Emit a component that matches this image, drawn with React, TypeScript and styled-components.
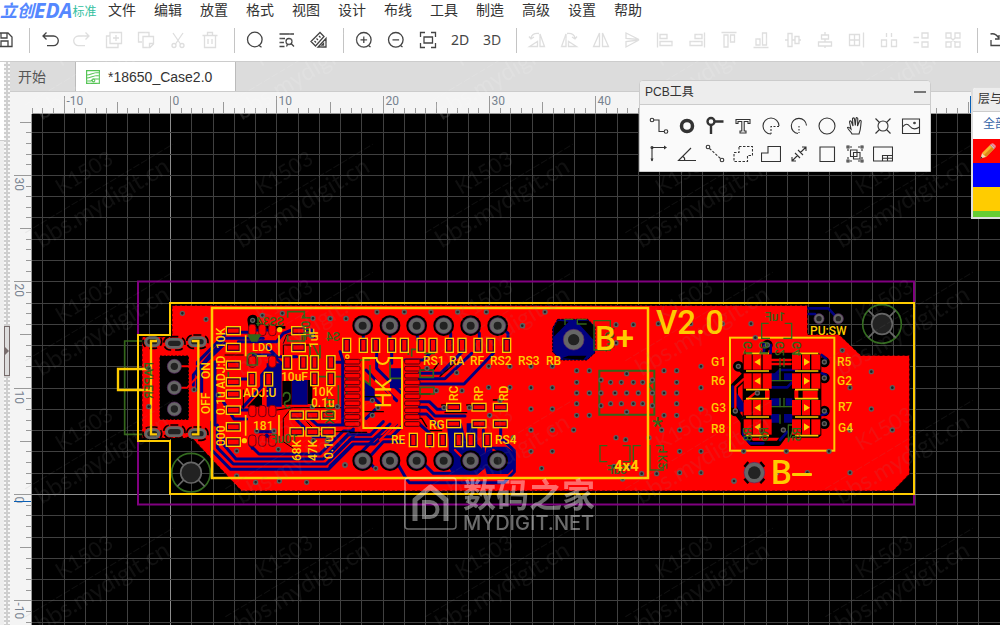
import React from 'react';
import styled, { createGlobalStyle, css } from 'styled-components';

const RED = '#ff0000';
const NAVY = '#000080';
const SILK = '#ffcc00';
const SILK_BACK = '#33661a';
const sans = '"Liberation Sans", "Noto Sans CJK SC", sans-serif';

const GlobalStyle = createGlobalStyle`
  * { box-sizing: border-box; }
  body { margin: 0; background: #fff; color: #333; font-family: ${sans}; overflow: hidden; }
  button { font: inherit; color: inherit; border: 0; padding: 0; background: none; cursor: pointer; }
  svg { display: block; }
`;

/* ---------- page frame ---------- */

const Page = styled.div`
  position: relative;
  display: flex;
  flex-direction: column;
  height: 100vh;
  overflow: hidden;
`;

const MenuBar = styled.header`
  display: flex;
  align-items: center;
  height: 20px;
  flex: none;
`;

const Brand = styled.a`
  display: flex;
  align-items: center;
  width: 99px;
  height: 20px;
  color: #5588ff;
  text-decoration: none;
  white-space: nowrap;
`;

const BrandHan = styled.span`
  font: italic 700 17px/20px "Noto Sans CJK SC", sans-serif;
`;

const BrandLatin = styled.span`
  font: italic 700 21px/20px "Noto Sans", sans-serif;
`;

const Edition = styled.span`
  color: #33bf9f;
  font: 12px/20px "Noto Sans CJK SC", sans-serif;
  padding-top: 2px;
`;

const Menu = styled.nav`
  display: flex;
  gap: 18px;
  padding-left: 9px;
`;

const MenuItem = styled.button`
  font-size: 14px;
  line-height: 20px;
  white-space: nowrap;
`;

const Toolbar = styled.div`
  display: flex;
  align-items: center;
  height: 40px;
  flex: none;
  margin: 0 0 1px -11px;
  overflow: hidden;
`;

const ToolButton = styled.button<{ $off?: boolean }>`
  display: flex;
  align-items: center;
  justify-content: center;
  width: 32px;
  height: 32px;
  flex: none;
  color: ${(p) => (p.$off ? '#dedede' : '#444')};
  font: 14px/20px "Noto Sans", sans-serif;
`;

const Divider = styled.span`
  width: 1px;
  height: 25px;
  flex: none;
  margin: 0 4px 0 8px;
  background: #c4c4c4;
`;

const Body = styled.div`
  display: flex;
  flex: 1;
  min-height: 0;
`;

const Side = styled.aside`
  display: flex;
  flex-direction: column;
  width: 4px;
  flex: none;
  background: #eeeeee;
  border-top: 1px solid #ccc;
`;

const SideHead = styled.div`
  height: 79px;
  background: #fff;
  border-bottom: 1px solid #ccc;
`;

const Splitter = styled.div`
  display: flex;
  align-items: center;
  width: 6px;
  flex: none;
  border-top: 1px solid #ccc;
  background-color: #cfcfcf;
  background-image: radial-gradient(circle at 1px 1px, #f8f8f8 1px, transparent 1px);
  background-size: 4px 4px;
`;

const Collapse = styled.button`
  display: flex;
  align-items: center;
  width: 6px;
  height: 50px;
  margin-top: 14px;
  background: #ddd;
  border: 1px solid #776c6c;
`;

const Editor = styled.main`
  display: flex;
  flex-direction: column;
  flex: 1;
  min-width: 0;
`;

const TabBar = styled.div`
  display: flex;
  height: 31px;
  flex: none;
  background: #dcdcdc;
  border-top: 1px solid #ccc;
  border-bottom: 1px solid #ccc;
`;

const Tab = styled.button<{ $active?: boolean }>`
  display: flex;
  align-items: center;
  gap: 8px;
  width: 65px;
  padding: 0 8px;
  color: #555;
  font-size: 14px;
  line-height: 20px;
  white-space: nowrap;
  ${(p) =>
    p.$active &&
    css`
      width: 161px;
      padding: 0 10px;
      color: #333;
      background: #fff;
      border-left: 1px solid #bbb;
      border-right: 1px solid #bbb;
    `}
`;

const Workspace = styled.div`
  position: relative;
  display: grid;
  grid-template: 22px minmax(0, 1fr) / 22px minmax(0, 1fr);
  flex: 1;
  min-height: 0;
  background: #f4f4f4;
`;

const TopRuler = styled.svg`
  grid-column: 1 / 3;
  width: 100%;
  height: 22px;
`;

const LeftRuler = styled.svg`
  width: 22px;
  height: 100%;
`;

const Canvas = styled.svg`
  width: 100%;
  height: 100%;
  background: #000;
`;

/* ---------- floating panels ---------- */

const ToolPanel = styled.section`
  position: absolute;
  z-index: 1;
  top: -12px;
  right: 69px;
  width: 292px;
  background: #fafafa;
  border: 1px solid #ccc;
  border-radius: 4px 4px 0 0;
`;

const LayerPanel = styled.section`
  position: absolute;
  z-index: 1;
  top: -5px;
  right: -111px;
  width: 140px;
  background: #fff;
  border: 2px solid #ddd;
  border-top-width: 1px;
  border-radius: 4px 4px 0 0;
`;

const PanelHead = styled.h2`
  display: flex;
  align-items: center;
  justify-content: space-between;
  height: 24px;
  margin: 0;
  padding: 0 4px 2px 5px;
  background: #ededed;
  border-bottom: 1px solid #ccc;
  border-radius: 3px 3px 0 0;
  font-size: 12px;
  font-weight: 400;
  line-height: 20px;
  white-space: nowrap;
`;

const ToolGrid = styled.div`
  display: grid;
  grid-template-columns: repeat(10, 28px);
  grid-auto-rows: 28px;
  padding: 7px 0 3px 5px;
`;

const GridButton = styled.button`
  display: flex;
  align-items: center;
  justify-content: center;
  color: #333;
`;

const LayerTab = styled.button`
  display: block;
  height: 27px;
  padding: 0 0 4px 10px;
  color: #3564a8;
  font-size: 12px;
  line-height: 20px;
  white-space: nowrap;
`;

const LayerRow = styled.button<{ $color: string; $height?: number }>`
  display: flex;
  align-items: center;
  width: 100%;
  height: ${(p) => p.$height ?? 24}px;
  padding-left: 6px;
  background: ${(p) => p.$color};
`;

const Watermarks = styled.svg`
  position: absolute;
  inset: 0;
  width: 100%;
  height: 100%;
  pointer-events: none;
`;

/* ---------- icons ---------- */

const Icon = ({ children, w = 1.3 }: { children: React.ReactNode; w?: number }) => (
  <svg width="20" height="20" viewBox="0 0 20 20" fill="none" stroke="currentColor" strokeWidth={w}>
    {children}
  </svg>
);

type Tool = { name: string; off?: boolean; text?: string; art?: React.ReactNode };

const toolGroups: Tool[][] = [
  [{ name: '保存', art: <path d="M2 3h11l4 4v9.500H2zM6 3v5h6V3M6 16v-5h7v5" /> }],
  [
    { name: '撤销', art: <path d="M6.500 2.500L3 6l3.500 3.500M3 6h10.500a4.800 4.800 0 0 1 0 9.600H7" /> },
    { name: '重做', off: true, art: <path d="M13.500 2.500L17 6l-3.500 3.500M17 6H6.500a4.800 4.800 0 0 0 0 9.600H13" /> },
    { name: '复制', off: true, art: <path d="M6 2.500h11.500v11H6zM6 6H2.500v11.500H14V14M12 5v6M9 8h6" /> },
    { name: '粘贴', off: true, art: <path d="M6 12H2.500V2.500H13V6M7 6.500h10.500V14l-3.500 3.500H7zM17 13.500h-3.500V17" /> },
    { name: '剪切', off: true, art: <><path d="M5 3l7.500 11M15 3L7.500 14" /><circle cx="6" cy="15.500" r="2" /><circle cx="14" cy="15.500" r="2" /></> },
    { name: '删除', off: true, art: <path d="M2.500 5.500h15M7.500 5V2.500h5V5M4.500 6v11.500h11V6M8 9v5M12 9v5" /> },
  ],
  [
    { name: '查找', art: <><circle cx="9.800" cy="9.500" r="7.300" /><path d="M13.500 15l3 2.300" /></> },
    { name: '查找相似', art: <><path d="M2.500 4h14.500M2.500 8.500H8M2.500 12.500H7M2.500 16.500h5" /><circle cx="12" cy="11.500" r="3" /><path d="M14 13.500l3 3M9.500 16.500l1-2" /></> },
    { name: '设计工具', art: <><path d="M2 11.500L11 2.500l4 4-8.500 9.500zM5.500 11l1.500 1.500M7.500 8.500l1.500 1.500M10 6l1.500 1.500" /><path d="M17 8.500V17H9zM14.500 13.500v1.500H13z" /></> },
  ],
  [
    { name: '放大', art: <><circle cx="9.800" cy="9.800" r="7.300" /><path d="M14.500 15.500l2 1.500M6.500 9.800h6.600M9.800 6.500v6.600" /></> },
    { name: '缩小', art: <><circle cx="9.800" cy="9.800" r="7.300" /><path d="M14.500 15.500l2 1.500M6.500 9.800h6.600" /></> },
    { name: '适应', art: <path d="M2.500 7V2.500H7M13 2.500h4.500V7M17.500 13v4.500H13M7 17.500H2.500V13M6 7h8.500v6H6z" /> },
    { name: '二维', text: '2D' },
    { name: '三维', text: '3D' },
  ],
  [
    { name: '左旋', off: true, art: <path d="M2.500 16.500h8v-5zM13 16.500V4l4.500 12.500zM4 8c1-4 4-5 8-4.500M2 6.500L4 9l3-2" /> },
    { name: '右旋', off: true, art: <path d="M17.500 16.500h-8v-5zM7 16.500V4L2.500 16.500zM16 8c-1-4-4-5-8-4.500M18 6.500L16 9l-3-2" /> },
    { name: '水平翻转', off: true, art: <path d="M8.500 3v13.500H2.500zM11.500 3v13.500h6z" /> },
    { name: '垂直翻转', off: true, art: <path d="M3 3v5.500l13 1zM3 17v-5.500l13-1.500z" /> },
    { name: '左对齐', off: true, art: <path d="M2.500 2.500v15M5 4.500h7v4H5zM5 11.500h12v4H5z" /> },
    { name: '右对齐', off: true, art: <path d="M17.500 2.500v15M8 4.500h7v4H8zM3 11.500h12v4H3z" /> },
    { name: '顶对齐', off: true, art: <path d="M2.500 2.500h15M5 5h4v12H5zM11.500 5h4v7h-4z" /> },
    { name: '底对齐', off: true, art: <path d="M2.500 17.500h15M5 9h4v6H5zM11.500 3h4v12h-4z" /> },
    { name: '水平居中', off: true, art: <path d="M2 10h3M9 10h3M16 10h2M5 3.500h4v13H5zM12 6.500h4v7h-4z" /> },
    { name: '垂直居中', off: true, art: <path d="M10 2v3M10 9v3M10 16v2M6.500 5h7v4h-7zM3.500 12h13v4h-13z" /> },
    { name: '网格对齐', off: true, art: <path d="M2.500 4.500h10v11h-10zM7.500 4.500v11M2.500 10h10M16.500 2.500v15" /> },
    { name: '水平分布', off: true, art: <path d="M2.500 10h5v6.500h-5zM12.500 10h5v6.500h-5zM7.500 3v4M12.500 3v4" /> },
    { name: '垂直分布', off: true, art: <path d="M11 3h6v5h-6zM11 12h6v5h-6zM2.500 7.500H8M2.500 12.500H8" /> },
    { name: '阵列', off: true, art: <path d="M3 3h5v5H3zM12 3h5v5h-5zM3 12h5v5H3zM12 12h5v5h-5zM8 8l4 4M12 8l-4 4" /> },
  ],
  [{ name: '单位', art: <path d="M2.500 4c4-1 6.500 1 8.500 4.500M11 5v4H7M3 10v5.500h14" /> }],
];

const pcbTools: Tool[] = [
  { name: '导线', art: <><circle cx="3" cy="4" r="1.800" /><path d="M5 4h5v11.500h5" /><circle cx="17" cy="15.500" r="1.800" /></> },
  { name: '焊盘', art: <circle cx="10" cy="10" r="5.500" strokeWidth="3.500" /> },
  { name: '过孔', art: <><circle cx="6" cy="5.500" r="3.500" strokeWidth="2.400" /><path d="M10 5.500h8.500M6 9.500V18" strokeWidth="2.400" /></> },
  { name: '文本', art: <path d="M3 3.500h14v4h-2V5.500h-3.800v9.500H13v2H7v-2h1.800V5.500H5v2H3z" /> },
  { name: '扇形', art: <><path d="M10 18A8 8 0 1 1 18 10" /><path d="M18 10.500h-8V18" strokeDasharray="2 1.500" /></> },
  { name: '圆弧', art: <><path d="M9 17.500A7.600 7.600 0 1 1 17.500 9.500" /><path d="M10 10v7" strokeDasharray="1.500 1.500" /></> },
  { name: '圆', art: <circle cx="10" cy="10" r="8" /> },
  { name: '拖动', art: <path d="M7 18c-1-3-4-4-4.500-6.500 1-1 2.500.5 3.500 1.500L4.500 6c0-1.500 1.500-1.500 2 0L8 10 7.500 3c0-1.500 2-1.500 2 0l.8 6.500.7-7c.3-1.300 2-1 1.800.5L12.500 10l2-5c.6-1.200 2-.6 1.700.7C15.500 10 16 13 14 18z" /> },
  { name: '孔', art: <><circle cx="10" cy="10" r="5" /><path d="M6.500 6.500l-4-4M13.500 6.500l4-4M6.500 13.500l-4 4M13.500 13.500l4 4" /></> },
  { name: '图片', art: <><path d="M1.500 3h17v14.500h-17zM1.500 11c3-3.500 5-3.500 7.500-.5s5 3.500 9.500.5" /><circle cx="13.500" cy="7" r=".8" /></> },
  { name: '原点', art: <><path d="M3 17V3.500h13" /><path d="M15 1.500l3 2-3 2zM1.500 14.500h3l-1.500 3z" fill="currentColor" stroke="none" /><circle cx="3" cy="3.500" r="1" /></> },
  { name: '角度', art: <path d="M19 16.500H1.500L14 4M6 12.500c1.500 1 2 2.500 1.500 4" /> },
  { name: '连线', art: <><circle cx="3" cy="3" r="1.800" /><path d="M4.500 4.500l11 10" strokeDasharray="2.500 1.500" /><circle cx="17" cy="16" r="1.800" /></> },
  { name: '铺铜', art: <path d="M6 2.500h13.500v9h-5v6H1v-9h5z" strokeDasharray="2.500 1.500" /> },
  { name: '实心填充', art: <path d="M7 2.500h12.500v15H.5V9H7z" /> },
  { name: '尺寸', art: <path d="M3 17l5.500-5.500M11.500 8.500L17 3M13 3h4v4M3 13v4h4M6 9l5 5M9 6l5 5" /> },
  { name: '矩形', art: <path d="M3 3h14.500v14.500H3z" /> },
  { name: '组合', art: <path d="M5.500 6h6.500v6.500H5.500zM8.500 8.500H15V15H8.500zM2 2h2v2H2zM16 2h2v2h-2zM2 16h2v2H2zM16 16h2v2h-2zM5 3h2M13 3h2M3 5v2M3 13v2M17 5v2M17 13v2M5 17h2M13 17h2" /> },
  { name: '画布', art: <path d="M.5 3h19v14H.5zM9.500 17v-5.500h10M14.500 11.500V17M9.500 14.300h10" /> },
];

/* ---------- rulers and grid ---------- */

const STEP = 10.636;
const ORIGIN_X = 170.500;
const ORIGIN_Y = 494.500;
const snap = (v: number) => Math.floor(v) + 0.5;
const range = (from: number, to: number) => Array.from({ length: to - from + 1 }, (_, i) => from + i);

const rulerText = { fill: '#77828f', fontSize: 12, fontFamily: 'Roboto, sans-serif' };

const HorizontalRuler = () => (
  <TopRuler>
    <g transform="translate(-10 -92)" shapeRendering="crispEdges">
      {range(-13, 200).map((i) => {
        const x = snap(ORIGIN_X + i * STEP);
        const top = i % 10 === 0 ? 96 : i % 5 === 0 ? 102 : 108;
        return (
          <g key={i}>
            <line x1={x} x2={x} y1={top} y2={113} stroke="#999" />
            {i % 10 === 0 && <text x={x + 2} y={105} {...rulerText}>{i}</text>}
          </g>
        );
      })}
      <line x1="32" x2="3000" y1="113.500" y2="113.500" stroke="#999" />
      <line x1="970.500" x2="970.500" y1="96" y2="113" stroke="#0a5fb4" />
    </g>
  </TopRuler>
);

const VerticalRuler = () => (
  <LeftRuler>
    <g transform="translate(-10 -114)" shapeRendering="crispEdges">
      {range(-100, 35).map((i) => {
        const y = snap(ORIGIN_Y - i * STEP);
        const left = i % 10 === 0 ? 14 : i % 5 === 0 ? 20 : 26;
        return (
          <g key={i}>
            <line x1={left} x2={31} y1={y} y2={y} stroke="#999" />
            {i % 10 === 0 && <text transform={`translate(15 ${y + 2}) rotate(90)`} {...rulerText}>{i}</text>}
          </g>
        );
      })}
      <line x1="31.500" x2="31.500" y1="114" y2="3000" stroke="#999" />
      <line x1="14" x2="31" y1="501.500" y2="501.500" stroke="#0a5fb4" />
    </g>
  </LeftRuler>
);

const Grid = () => (
  <g shapeRendering="crispEdges">
    {range(-7, 100).map((i) => {
      const x = snap(ORIGIN_X + i * STEP * 2);
      return <line key={i} x1={x} x2={x} y1="0" y2="3000" stroke={i === 0 ? '#8c8c8c' : '#404040'} />;
    })}
    {range(-60, 18).map((i) => {
      const y = snap(ORIGIN_Y - i * STEP * 2);
      return <line key={i} x1="0" x2="3000" y1={y} y2={y} stroke={i === 0 ? '#8c8c8c' : '#404040'} />;
    })}
  </g>
);

/* ---------- board drawing: each sheet is laid out in thirds of a pixel ---------- */

const Sheet = ({ x, y, children }: { x: number; y: number; children: React.ReactNode }) => (
  <g transform={`translate(${x} ${y}) scale(${1 / 3})`}>{children}</g>
);

type P = [number, number];
type Box = [number, number, number, number];

const Vias = ({ at }: { at: P[] }) => (
  <g fill="#222" stroke="#5e5e5e" strokeWidth="4">
    {at.map(([x, y], i) => <circle key={i} cx={x} cy={y} r="6" />)}
  </g>
);

const Traces = ({ paths, color = NAVY, width = 8 }: { paths: string[]; color?: string; width?: number }) => (
  <g fill="none" stroke={color} strokeWidth={width} strokeLinejoin="round" strokeLinecap="round">
    {paths.map((p) => <polyline key={p} points={p} />)}
  </g>
);

const Lands = ({ boxes }: { boxes: Box[] }) => (
  <g>
    {boxes.map(([x1, y1, x2, y2], i) => {
      const tall = y2 - y1 > x2 - x1;
      const padX = tall ? 6 : 5;
      const padY = tall ? 5 : 6;
      return (
        <g key={i}>
          <rect x={x1} y={y1} width={x2 - x1} height={y2 - y1} fill="#400028" stroke={SILK} strokeWidth="4" />
          <rect x={x1 + padX} y={y1 + padY} width={x2 - x1 - padX * 2} height={y2 - y1 - padY * 2} fill={RED} />
        </g>
      );
    })}
  </g>
);

const RoundPad = ({ x, y, r, hole, gap = 0 }: { x: number; y: number; r: number; hole: number; gap?: number }) => (
  <g>
    {gap > 0 && <circle cx={x} cy={y} r={r + gap} fill="#000" />}
    <circle cx={x} cy={y} r={r} fill="#666" stroke="#5c2a66" strokeWidth="2" />
    <circle cx={x} cy={y} r={hole} fill="#222" />
  </g>
);

const SlotPad = ({ x, y, w }: { x: number; y: number; w: number }) => (
  <g>
    <rect x={x - w / 2 - 4} y={y - 20} width={w + 8} height="40" rx="20" fill="none" stroke="#000" strokeWidth="5" strokeDasharray="24 12" />
    <rect x={x - w / 2} y={y - 16} width={w} height="32" rx="16" fill="#666" />
    <rect x={x - w / 2 + 9} y={y - 8} width={w - 18} height="16" rx="8" fill="#222" />
  </g>
);

const MountHole = ({ x, y }: { x: number; y: number }) => (
  <g fill="none" strokeWidth="5">
    <circle cx={x} cy={y} r="58" stroke="#336b1f" />
    <path d={`M${x - 41} ${y - 41}l82 82M${x + 41} ${y - 41}l-82 82`} stroke="#666" />
    <circle cx={x} cy={y} r="31" fill="#222" stroke="#666" />
  </g>
);

const leftLands: Box[] = [
  [349, 155, 391, 179], [349, 205, 391, 230], [349, 258, 391, 283], [349, 308, 391, 333],
  [349, 345, 391, 370], [349, 393, 391, 418], [349, 443, 391, 468], [349, 488, 391, 514],
  [545, 155, 586, 179], [545, 205, 586, 230],
  [518, 242, 545, 283], [568, 242, 592, 283], [602, 242, 625, 283], [650, 242, 675, 283],
  [602, 291, 625, 332], [650, 291, 675, 332], [413, 292, 438, 333], [463, 292, 488, 333],
  [540, 408, 580, 433], [588, 408, 627, 433], [635, 408, 675, 433],
  [540, 458, 580, 483], [588, 458, 627, 483], [635, 458, 675, 483],
];

const midLands: Box[] = [
  ...[38, 88, 125, 173, 211, 261, 297, 346, 384, 432, 470, 518].map((x): Box => [x, 145, x + 24, 187]),
  ...[350, 426, 490].flatMap((x): Box[] => [[x, 340, x + 42, 363], [x, 390, x + 42, 413]]),
  ...[238, 287, 326, 374, 410, 460].map((x): Box => [x, 430, x + 24, 470]),
];

const smallPins: P[] = [
  [427, 165], [457, 165], [487, 165], [427, 260], [487, 260],
  [427, 408], [457, 408], [487, 408], [427, 497], [457, 497], [487, 497],
];

const LeftSection = () => (
  <Sheet x={110} y={275}>
    <rect x="150" y="243" width="85" height="190" fill="#000" stroke="#000" strokeWidth="3" strokeDasharray="7 4" />
    <Traces
      width={9}
      paths={[
        '305,440 305,525 362,583 655,583 730,508', '322,450 322,518 370,567 648,567 730,485',
        '340,490 340,508 378,552 640,552 730,462', '420,500 420,510 447,537 630,537 700,468 730,468',
        '262,345 262,262 352,172 420,172', '275,350 275,272 345,205', '250,330 250,300 300,240 345,190 460,190',
        '315,260 315,450', '340,380 372,432 410,432', '392,312 430,312', '385,200 500,200 520,175 545,165',
        '430,240 487,240 520,270', '400,395 455,335 455,300 490,260', '380,405 430,405', '600,430 622,450 730,450',
        '560,435 610,485 660,485', '586,165 605,165 612,185', '440,470 492,470', '675,262 720,262', '470,215 500,245 560,245',
        '427,165 487,165', '427,497 427,520', '457,497 470,480 487,497',
      ]}
    />
    <path d="M470 265h45v130h-45zM545 315h48v78h-48z" fill={NAVY} />
    <path d="M412 135a16 16 0 0 1 32 0l12 18h70v8h-110zM517 318h28v72h-28zM593 315h14v72h-14zM412 395l44-48v48z" fill="#000" />
    <Traces color={RED} width={6} paths={['200,274 262,274', '200,338 232,338 262,305', '520,392 640,392']} />
    <Traces color="#000" width={3} paths={['500,405 550,398 700,398', '590,440 620,470 720,470', '540,405 520,430 520,500 550,520', '400,345 400,400', '520,240 520,210 600,210', '345,240 400,240', '545,180 530,180 520,205']} />
    <g fill={RED} stroke="#700010" strokeWidth="3">
      {smallPins.map(([x, y]) => <rect key={`${x}-${y}`} x={x - 11} y={y - 17} width="22" height="34" rx="9" />)}
    </g>
    <g fill="none" stroke={SILK_BACK} strokeWidth="5">
      <path d="M120 198H44v280h76M533 128v-18h50v18M533 180v18h50v-18M600 210v35M630 210v40l-20-40M412 245a16 16 0 0 1 30 0v25h-30zM355 290v40h35M600 305h110v60M520 365q0-12 10-12t10 12-10 14-4 14 14 0" />
      <path d="M415 180h35l-10 18h-15zM685 330v60" fill={SILK_BACK} />
    </g>
    <Lands boxes={leftLands} />
    <SlotPad x={127} y={200} w={48} />
    <SlotPad x={193} y={205} w={56} />
    <SlotPad x={262} y={200} w={56} />
    <SlotPad x={127} y={476} w={48} />
    <SlotPad x={193} y={470} w={56} />
    <SlotPad x={262} y={476} w={56} />
    {[274, 338, 402].map((y) => <RoundPad key={y} x={193} y={y} r={21} hole={11} />)}
    <MountHole x={243} y={593} />
    <g fill="none" stroke={SILK} strokeWidth="7">
      <path d="M141 198h-18v280h18M245 198h20v280h-20M123 282H24v63h99" />
      <path d="M407 181v63M507 181v63M407 420v62M507 420v62M441 243h30" strokeWidth="5" />
    </g>
    <circle cx="509" cy="164" r="8" fill={SILK} />
    <circle cx="403" cy="497" r="8" fill={SILK} />
    <Vias
      at={[
        [217, 115], [288, 133], [517, 115], [457, 121], [609, 130], [660, 130], [708, 130], [116, 280], [116, 395],
        [252, 344], [325, 360], [380, 528], [380, 603], [437, 622], [508, 618], [590, 622], [505, 523], [440, 468],
        [492, 468], [610, 497], [652, 497], [705, 570], [683, 395], [607, 395], [428, 136], [605, 183],
      ]}
    />
  </Sheet>
);

const pinRows = range(0, 9).map((i) => 215 + Math.round(i * 20.8));

const MiddleSection = () => (
  <Sheet x={330} y={290}>
    <path d="M350 400h45l15 60v-60h32v62l22 22v52l-18 14h-80l-10-20v-80zM470 470h60l26 20v40l-22 22h-64l-10-40z" fill={NAVY} />
    <path d="M104 262l30 30v40h-30zM180 235h35v60h-35z" fill={NAVY} />
    <Traces
      width={9}
      paths={[
        '268,250 332,250 400,182', '268,266 345,266 425,190', '268,282 402,282 490,190', '38,210 38,400',
        '268,335 298,335 322,358 345,358', '268,352 290,352 315,378 405,378', '268,372 290,372 330,412', '230,402 268,402 300,430 300,470',
        '0,510 62,448 130,448 180,402', '0,528 68,462 134,462 200,402', '0,492 55,434 122,434 160,395', '90,490 140,440 185,440 215,410',
        '115,505 160,455 215,455', '205,525 228,565 238,578 522,578 553,545 553,482 520,450', '285,525 310,550 440,550 460,530 460,420', '130,530 90,490',
        '100,110 100,150', '180,110 180,150', '262,110 262,150', '346,110 362,130 362,150', '430,110 448,130 448,150', '512,110 534,130 534,150',
        '140,190 140,235 212,307', '185,190 185,220', '300,190 280,210 225,210', '30,185 38,210',
        '108,240 175,307 200,332', '108,300 150,342', '108,385 150,345', '512,413 512,450',
      ]}
    />
    <Traces color={RED} width={7} paths={['100,262 135,295 168,295', '110,345 145,352', '130,250 185,320 185,370 165,388', '375,480 410,515', '490,480 530,515', '210,390 150,450']} />
    <Traces color="#000" width={4} paths={['330,259 380,215', '240,240 310,240 325,220', '268,312 300,312', '105,320 150,320', '105,365 160,365', '345,368 410,368', '335,345 350,345', '410,345 430,345', '490,330 520,330', '60,427 110,427', '250,385 275,385 290,410', '300,422 335,422']} />
    {pinRows.map((y) => (
      <g key={y} stroke="#50000c" strokeWidth="3" fill={RED}>
        <rect x="44" y={y - 7} width="46" height="14" rx="4" />
        <rect x="224" y={y - 7} width="46" height="14" rx="4" />
      </g>
    ))}
    <g fill="none" stroke={SILK_BACK} strokeWidth="5">
      <path d="M270 240h40v22h-40zM270 292h42v20h-42zM120 225v60l-20-15M90 210h30M180 215v50h35M235 175v20M245 200v-22h15M285 180v10h30" />
    </g>
    <Lands boxes={midLands} />
    {[98, 180, 260, 341, 422, 503].map((x) => (
      <g key={x}>
        <RoundPad x={x} y={107} r={24} hole={12} gap={7} />
        <RoundPad x={x} y={512} r={24} hole={12} gap={7} />
      </g>
    ))}
    <path d="M100 204h40a18 18 0 0 0 36 0h40v210H100z" fill="none" stroke={SILK} strokeWidth="6" />
    <circle cx="52" cy="200" r="5" fill="none" stroke={SILK} strokeWidth="4" />
    <Vias
      at={[
        [1, 86], [48, 86], [141, 66], [223, 66], [303, 66], [383, 66], [469, 66], [578, 107], [380, 248], [291, 235],
        [319, 302], [396, 302], [476, 292], [540, 292], [476, 229], [540, 229], [479, 376], [550, 443], [510, 331],
        [342, 353], [418, 353], [45, 525], [137, 535], [127, 331], [144, 353], [127, 376], [22, 350],
      ]}
    />
  </Sheet>
);

const RightSection = () => (
  <Sheet x={520} y={290}>
    <path d="M113 88h90l22 22v78l-24 22h-78l-25-24v-72z" fill={NAVY} stroke="#001" strokeWidth="3" strokeDasharray="7 4" />
    <path d="M113 92l-12 22v26l45-45zM205 92l18 18v42l-55-60zM125 205l20-8h55l-10 12z" fill="#000" />
    <RoundPad x={161} y={149} r={31} hole={17} />
    <g fill="none" stroke={SILK_BACK} strokeWidth="4">
      <path d="M238 242h165v132H238zM385 285l18-12v35z" strokeWidth="6" />
      <path d="M222 92h49v88h-49zM135 105V88h25M200 88h-28v14h28M262 467h-22v48h22M308 467h22v48h-22M362 467h-22v48M408 467h22v20M430 520v20h-40v-75" />
    </g>
    <Vias
      at={[
        [75, 66], [7, 107], [288, 104], [340, 104], [415, 101], [512, 101], [607, 101], [288, 159],
        ...[229, 293, 357, 420, 484].flatMap((y): P[] => [[33, y], [97, y], [543, y]]),
        [543, 548], [65, 535], [161, 420],
        ...[242, 309, 376].flatMap((y): P[] => [[170, y], [208, y], [432, y], [470, y]]),
        ...[277, 341].flatMap((y): P[] => [[170, y], [272, y], [304, y], [340, y], [368, y], [470, y]]),
        [320, 251], [243, 270], [397, 270], [243, 309], [285, 309], [320, 309], [355, 309], [397, 309],
        [243, 347], [397, 347], [320, 366], [425, 420], [479, 420], [288, 443], [317, 449], [387, 443],
        [479, 484], [479, 548], [282, 529], [327, 532], [365, 551], [410, 551], [308, 567], [642, 573],
      ]}
    />
  </Sheet>
);

const ledVias: P[] = [[373, 216], [373, 264], [373, 363], [373, 401], [115, 229], [106, 363], [202, 165], [250, 420]];

const ledLoops = [
  '106,358 106,290 130,268', '98,350 98,290 130,258', '130,395 130,430 155,460 235,460 250,440 250,420',
  '202,165 195,190', '115,229 130,245', '100,355 130,395',
];

const LedSection = () => (
  <Sheet x={700} y={290}>
    <Traces color="#000" width={16} paths={ledLoops} />
    <path d="M128 196l9-8h218l9 8v240l-9 7H137l-9-8z" fill="#000" />
    <g fill="#000">{ledVias.map(([x, y]) => <circle key={`${x}-${y}`} cx={x} cy={y} r="16" />)}</g>
    <path d="M283 300h12v26h-12zM308 302h45v22h-45zM195 300h14v28h-14z" fill={RED} />
    <path d="M104 300l28 40v25h-12l-16-25zM213 250h25v24h-25zM252 250h24v24h-24zM213 325h30v22h-30zM257 325h20v22h-20zM213 372h25v26h-25zM252 372h25v26h-25z" fill={NAVY} />
    <Traces width={8} paths={['98,290 98,350', '192,160 192,190', '212,292 262,292 275,278', '217,262 240,240 290,240', '365,195 378,205', '365,250 378,255', '365,375 380,370', '130,420 130,435 150,460 190,460', '240,450 262,425', '326,55 385,55 408,80', '326,72 345,72', '212,165 212,190']} />
    <Traces color={RED} width={7} paths={['106,358 106,290 130,268', '140,330 170,305', '215,210 272,210', '215,222 272,222']} />
    <Traces color={SILK_BACK} width={4} paths={['240,205 240,230', '252,205 252,230', '240,235 240,272', '210,272 275,272', '240,325 240,350', '252,325 252,350', '210,350 280,350', '240,375 240,400', '265,405 285,405 265,455 265,405']} />
    {[216, 273, 353, 411].map((y) => (
      <g key={y}>
        <g fill={RED}>
          {[[131, 155], [158, 184], [188, 215], [276, 303], [306, 330], [334, 361]].map(([a, b]) => (
            <rect key={a} x={a} y={y - 23} width={b - a} height="46" />
          ))}
        </g>
        <path d={`M163 ${y}l18-11v22zM330 ${y}l-18-11v22z`} fill={SILK} />
      </g>
    ))}
    <g stroke={SILK} strokeWidth="5">
      {[190, 243, 299, 326, 381, 437].map((y) => <path key={y} d={`M138 ${y}h69M285 ${y}h70`} />)}
    </g>
    <rect x="90" y="143" width="313" height="339" fill="none" stroke={SILK} strokeWidth="6" />
    <path d="M206 100h-21v45h25M254 100h21v45h-25" fill="none" stroke={SILK_BACK} strokeWidth="4" />
    <RoundPad x={357} y={86} r={15} hole={8} />
    <RoundPad x={415} y={86} r={15} hole={8} />
    <RoundPad x={163} y={548} r={31} hole={19} />
    <path d="M133 530l12-14M193 530l-12-14M133 566l12 14M193 566l-12 14" stroke="#000" strokeWidth="7" />
    <MountHole x={546} y={102} />
    <Vias
      at={[
        [153, 101], [166, 143], [427, 181], [514, 245], [450, 293], [577, 293], [514, 357], [450, 420], [577, 420],
        [131, 484], [259, 484], [387, 484], [450, 548], [322, 548], [230, 548], [102, 573], [172, 309], ...ledVias,
      ]}
    />
  </Sheet>
);

/* Silkscreen lettering: [text, x, y, size?] */
const flatLabels: [string, number, number, number?][] = [
  ['LDO', 252, 351, 11], ['ADJ:U', 243, 397], ['181', 253, 430], ['10uF', 281, 381], ['10K', 312, 396], ['0.1u', 311, 407],
  ['RS1', 423, 365], ['RA', 449, 365], ['RF', 470, 365], ['RS2', 490, 365], ['RS3', 518, 365], ['RB', 546, 365],
  ['RG', 429, 429], ['RE', 391, 444], ['RS4', 495, 444],
  ['G1', 711, 366], ['R6', 711, 385], ['G3', 711, 412], ['R8', 711, 433],
  ['R5', 837, 366], ['G2', 837, 385], ['R7', 838, 411], ['G4', 838, 432], ['PU:SW', 810, 335],
];

const uprightLabels: [string, number, number][] = [
  ['10K', 225, 349], ['ADJ:D', 225, 389], ['0.1u', 225, 415], ['000', 225, 446], ['ON', 210, 379], ['OFF', 210, 414],
  ['1uF', 318, 348], ['68K', 301, 461], ['47K', 317, 461], ['0.1u', 333, 459],
  ['RC', 458, 401], ['RP', 483, 401], ['RD', 508, 401],
];

const bigLabels: [string, number, number][] = [['V2.0', 656, 334], ['B+', 595, 350], ['B', 771, 484]];

const mirroredLabels: [string, number, number, number][] = [
  ['SS34', 284, 326, 0], ['S4', 340, 341, 0], ['5uF', 627, 474, 0], ['1uF', 785, 321, 0],
  ['10uF', 310, 314, 90], ['PAPER', 153, 362, 90], ['100K', 334, 396, 90], ['10uF', 614, 325, 90], ['1K2', 667, 448, 90],
  ['G1', 752, 341, 90], ['G1', 768, 341, 90], ['G2', 784, 341, 90], ['G4', 801, 341, 90],
  ['R8', 752, 427, 90], ['R6', 768, 427, 90], ['R5', 801, 427, 90], ['10uF', 298, 443, 0],
];

const Lettering = () => (
  <g fontFamily="Roboto, sans-serif" fontSize="12" fontWeight="500">
    <g fill={SILK_BACK}>
      {mirroredLabels.map(([t, x, y, turn], i) => (
        <text key={i} transform={`translate(${x} ${y}) rotate(${turn}) scale(${turn ? '1 -1' : '-1 1'})`}>{t}</text>
      ))}
      <text x="652" y="434" fontSize="24">*</text>
    </g>
    <g fill={SILK}>
      {flatLabels.map(([t, x, y, size]) => <text key={`${t}${x}`} x={x} y={y} fontSize={size ?? 12}>{t}</text>)}
      {uprightLabels.map(([t, x, y]) => (
        <text key={`${t}${x}`} transform={`translate(${x} ${y}) rotate(-90)`}>{t}</text>
      ))}
      <text transform="translate(391 408) rotate(-90)" fontSize="22" fontWeight="400">HK</text>
      <text x="614" y="471" fontSize="15" fontWeight="700">4x4</text>
      <g fontSize="33" fontWeight="500">
        {bigLabels.map(([t, x, y]) => <text key={t} x={x} y={y}>{t}</text>)}
      </g>
      <rect x="792" y="473" width="20" height="3" rx="1" />
    </g>
  </g>
);

const Board = () => (
  <g>
    <path
      d="M172 305.500H807.500V334.500H839L861 355.500H909.500V474L893 491H241.500L192 438H142V337H172Z"
      fill={RED}
      stroke="#200"
      strokeDasharray="3 2"
    />
    <rect x="138" y="281.500" width="776" height="223" fill="none" stroke="#800080" strokeWidth="2" />
    <LeftSection />
    <MiddleSection />
    <RightSection />
    <LedSection />
    <g fill="none" stroke={SILK} strokeWidth="2">
      <path d="M170 303H914V494H170V441H138V335H170Z" />
      <rect x="212" y="308" width="436" height="170" strokeWidth="2.500" />
    </g>
    <Lettering />
  </g>
);

/* ---------- watermark ---------- */

const Stamp = ({ x, y }: { x: number; y: number }) => (
  <g transform={`translate(${x} ${y}) rotate(-31)`}>
    <text x="0" y="0" fontSize="21">K1503</text>
    <line x1="-50" x2="122" y1="14" y2="14" stroke="currentColor" strokeDasharray="7 2" />
    <text x="-44" y="36" fontSize="24">bbs.mydigit.cn</text>
  </g>
);

const WatermarkLayer = () => (
  <Watermarks aria-hidden="true">
    <g fill="#8a8a8a" color="#8a8a8a" opacity=".12" fontFamily="Lato, sans-serif">
      {range(0, 3).flatMap((r) => range(0, 4).map((c) => <Stamp key={`${r}-${c}`} x={61 + c * 200} y={195 + r * 128} />))}
    </g>
    <g fill="#fff" color="#fff" opacity=".12" fontFamily="Lato, sans-serif">
      {range(0, 4).map((c) => <Stamp key={c} x={61 + c * 200} y={67} />)}
    </g>
    <g fill="#fff" stroke="#fff" opacity=".42">
      <rect x="405" y="478" width="51" height="51" rx="3" fill="none" strokeWidth="1.500" />
      <path d="M415 521V500L430.500 487L446 500V521" fill="none" strokeWidth="5" strokeLinejoin="round" />
      <path d="M424 502h6a7 7 0 0 1 0 15h-6z" fill="none" strokeWidth="4" />
      <text x="463" y="507" stroke="none" fontSize="33" fontWeight="700" fontFamily='"Noto Sans CJK SC", sans-serif'>数码之家</text>
      <text x="463" y="530" stroke="none" fontSize="20" fontWeight="500" fontFamily="Inter, sans-serif">MYDIGIT.NET</text>
    </g>
  </Watermarks>
);

const menus = ['文件', '编辑', '放置', '格式', '视图', '设计', '布线', '工具', '制造', '高级', '设置', '帮助'];

export default function App() {
  return (
    <Page>
      <GlobalStyle />
      <MenuBar>
        <Brand href="#">
          <BrandHan>立创</BrandHan>
          <BrandLatin>EDA</BrandLatin>
          <Edition>标准</Edition>
        </Brand>
        <Menu>
          {menus.map((m) => <MenuItem key={m}>{m}</MenuItem>)}
        </Menu>
      </MenuBar>
      <Toolbar>
        {toolGroups.map((group, g) => (
          <React.Fragment key={g}>
            {g > 0 && <Divider />}
            {group.map((t) => (
              <ToolButton key={t.name} $off={t.off} disabled={t.off} aria-label={t.name}>
                {t.text ?? <Icon>{t.art}</Icon>}
              </ToolButton>
            ))}
          </React.Fragment>
        ))}
      </Toolbar>
      <Body>
        <Side><SideHead /></Side>
        <Splitter>
          <Collapse aria-label="收起">
            <svg width="4" height="8" viewBox="0 0 4 8"><path d="M0 0l4 4-4 4z" fill="#776c6c" /></svg>
          </Collapse>
        </Splitter>
        <Editor>
          <TabBar>
            <Tab>开始</Tab>
            <Tab $active>
              <svg width="14" height="14" viewBox="0 0 14 14" fill="none" stroke="#55c455" strokeWidth="1.200">
                <path d="M.6.6h12.800v12.800H.6zM1 5c4 0 5-2.500 12-2.500M1 8c4 0 5-2.500 12-2.500M1 11h4l2-2h6" />
                <circle cx="7.500" cy="10.500" r="1.300" />
              </svg>
              *18650_Case2.0
            </Tab>
          </TabBar>
          <Workspace>
            <HorizontalRuler />
            <VerticalRuler />
            <Canvas>
              <g transform="translate(-32 -114)">
                <Grid />
                <Board />
              </g>
            </Canvas>
            <ToolPanel>
              <PanelHead>
                PCB工具
                <svg width="12" height="2"><rect width="12" height="2" fill="#777" /></svg>
              </PanelHead>
              <ToolGrid>
                {pcbTools.map((t) => (
                  <GridButton key={t.name} aria-label={t.name}><Icon w={1.1}>{t.art}</Icon></GridButton>
                ))}
              </ToolGrid>
            </ToolPanel>
            <LayerPanel>
              <PanelHead>层与元素</PanelHead>
              <LayerTab>全部层</LayerTab>
              <LayerRow $color="#ff0000" aria-label="顶层">
                <svg width="18" height="18" viewBox="0 0 18 18">
                  <path d="M3 11l8-8 4 4-8 8z" fill="#f7b52c" />
                  <path d="M5 13l8-8 2 2-8 8z" fill="#d98a1a" />
                  <path d="M3 11l4 4-5.500 1.500z" fill="#f6dcae" />
                  <path d="M2 14.500l1.500 1.500-2.200.8z" fill="#222" />
                  <path d="M11 3l1-1 4 4-1 1z" fill="#b9c4cc" />
                  <path d="M12 2q1.500-1.500 3 0l1.500 1.500q1 1.500-.5 2.500z" fill="#f08a94" />
                </svg>
              </LayerRow>
              <LayerRow $color="#0000ff" aria-label="底层" />
              <LayerRow $color="#ffcc00" aria-label="顶层丝印" />
              <LayerRow $color="#66cc33" $height={6} aria-label="底层丝印" />
            </LayerPanel>
          </Workspace>
        </Editor>
      </Body>
      <WatermarkLayer />
    </Page>
  );
}
